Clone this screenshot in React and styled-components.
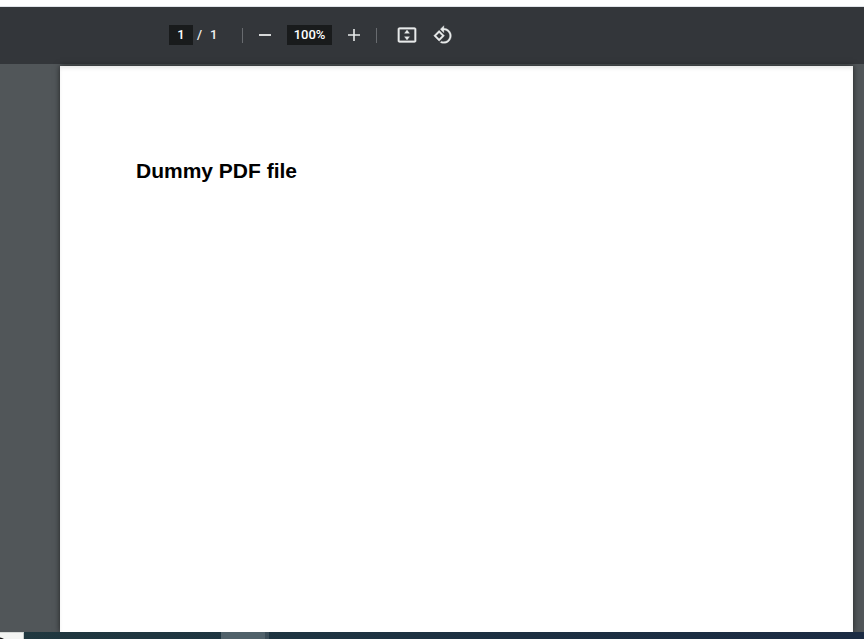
import React, { useState } from "react";
import styled, { createGlobalStyle } from "styled-components";

const GlobalStyle = createGlobalStyle`
  *, *::before, *::after { box-sizing: border-box; }
  body {
    margin: 0;
    background: #515659;
    font-family: Roboto, "Liberation Sans", sans-serif;
  }
`;

const Viewer = styled.div`
  display: flex;
  flex-direction: column;
  min-height: 100vh;
`;

const TopStrip = styled.div`
  height: 7px;
  background: #fdfefe;
  border-bottom: 1px solid #dfe3e8;
`;

const Toolbar = styled.header`
  display: flex;
  align-items: center;
  height: 57px;
  padding: 0 12px 1px 169px;
  background: #33363a;
  color: #f1f1f1;
  font-size: 13px;
  font-weight: 500;
  line-height: 20px;
  box-shadow: 0 2px 2px rgba(0, 0, 0, 0.3);
`;

const ToolbarField = styled.input`
  width: ${(p) => p.$width}px;
  height: 20px;
  padding: 0;
  border: 0;
  background: #191b1c;
  color: #ffffff;
  font: inherit;
  text-align: center;
`;

const PageSelector = styled.div`
  display: flex;
  align-items: center;
  width: 73px;
  gap: 4px;
`;

const PageCount = styled.span`
  margin-left: 4px;
`;

const Divider = styled.span`
  width: 1px;
  height: 15px;
  background: #686b6f;
`;

const ZoomControls = styled.div`
  display: flex;
  align-items: center;
  gap: 12px;
  padding: 0 12px;
`;

const FitControls = styled.div`
  display: flex;
  align-items: center;
  gap: 16px;
  padding-left: 20px;
`;

const IconButton = styled.button`
  display: flex;
  padding: 0;
  border: 0;
  background: none;
  color: #e8eaea;
  cursor: pointer;

  svg {
    display: block;
    width: 20px;
    height: 20px;
    fill: currentColor;
  }
`;

const Canvas = styled.main`
  display: flex;
  flex: 1;
  padding: 2px 11px 0 60px;
  background: #515659;
`;

const Page = styled.article`
  flex: 1;
  padding: 91px 76px;
  background: #ffffff;
  box-shadow: 0 0 6px rgba(0, 0, 0, 0.6), inset 0 3px 4px -1px rgba(0, 0, 0, 0.1);
`;

const Title = styled.h1`
  margin: 0;
  color: #000000;
  font: bold 21px/28px "Liberation Sans", Arial, sans-serif;
`;

const Taskbar = styled.footer`
  position: relative;
  display: flex;
  height: 7px;
  background: linear-gradient(90deg, #20383f 0%, #1e3441 35%, #1c2f41 60%, #1b2b43 100%);
`;

const StartTile = styled.div`
  width: 24px;
  overflow: hidden;
  background: #f3f4f2;
  border-top: 1px solid #d5d8d6;
  border-right: 1px solid #c5cccb;

  svg { display: block; }
`;

const ActiveTask = styled.div`
  width: 48px;
  margin-left: 197px;
  background: #50616a;
  border-right: 4px solid #3b4d58;
`;

export default function App() {
  const [page, setPage] = useState("1");
  const [zoom, setZoom] = useState(100);

  return (
    <Viewer>
      <GlobalStyle />
      <TopStrip />
      <Toolbar>
        <PageSelector>
          <ToolbarField
            $width={24}
            aria-label="Page number"
            value={page}
            onChange={(e) => setPage(e.target.value)}
          />
          <span>/</span>
          <PageCount>1</PageCount>
        </PageSelector>
        <Divider />
        <ZoomControls>
          <IconButton aria-label="Zoom out" onClick={() => setZoom((z) => Math.max(25, z - 25))}>
            <svg viewBox="0 0 20 20"><path d="M4 9h12v2H4z" opacity="0.9" /></svg>
          </IconButton>
          <ToolbarField
            $width={45}
            aria-label="Zoom level"
            value={`${zoom}%`}
            onChange={(e) => setZoom(parseInt(e.target.value, 10) || 0)}
          />
          <IconButton aria-label="Zoom in" onClick={() => setZoom((z) => Math.min(500, z + 25))}>
            <svg viewBox="0 0 20 20"><path d="M4 9.2h5.2V4h1.6v5.2H16v1.6h-5.2V16H9.2v-5.2H4z" /></svg>
          </IconButton>
        </ZoomControls>
        <Divider />
        <FitControls>
          <IconButton aria-label="Fit to page">
            <svg viewBox="0 0 24 24" stroke="currentColor" strokeWidth="0.4">
              <path d="M21 3H3c-1.1 0-2 .9-2 2v14c0 1.1.9 2 2 2h18c1.1 0 2-.9 2-2V5c0-1.1-.9-2-2-2zm0 16H3V5h18v14zM12 6L9 10h6zM12 18l3-4H9z" />
            </svg>
          </IconButton>
          <IconButton aria-label="Rotate counterclockwise">
            <svg viewBox="0 0 24 24" stroke="currentColor" strokeWidth="0.4">
              <path d="M7.34 6.41L.86 12.9l6.49 6.48 6.49-6.48-6.5-6.49zM3.69 12.9l3.66-3.66L11 12.9l-3.66 3.66-3.65-3.66zm15.67-6.26C17.61 4.88 15.3 4 13 4V.76L8.76 5 13 9.24V6c1.79 0 3.58.68 4.95 2.05 2.73 2.73 2.73 7.17 0 9.9C16.58 19.32 14.79 20 13 20c-.97 0-1.94-.21-2.84-.61l-1.49 1.49C10.02 21.62 11.51 22 13 22c2.3 0 4.61-.88 6.36-2.64 3.52-3.51 3.52-9.21 0-12.72z" />
            </svg>
          </IconButton>
        </FitControls>
      </Toolbar>
      <Canvas>
        <Page>
          <Title>Dummy PDF file</Title>
        </Page>
      </Canvas>
      <Taskbar>
        <StartTile>
          <svg width="6" height="6" viewBox="0 0 6 6">
            <path d="M0 4.5Q2 4.5 4 6H0z" fill="#111111" />
          </svg>
        </StartTile>
        <ActiveTask />
      </Taskbar>
    </Viewer>
  );
}
